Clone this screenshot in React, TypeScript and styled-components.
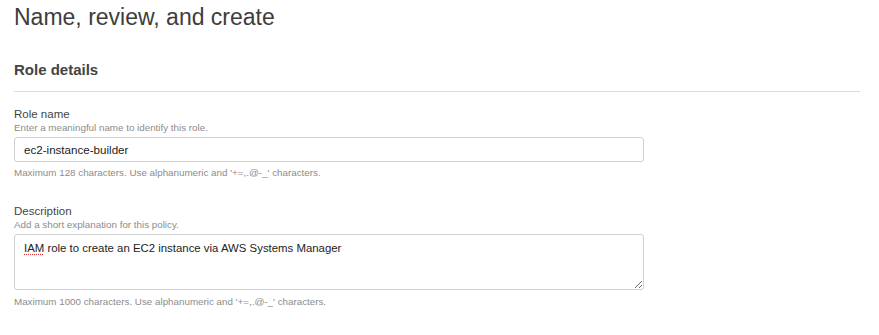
import React from 'react';
import styled, { createGlobalStyle } from 'styled-components';

const GlobalStyle = createGlobalStyle`
  html, body {
    margin: 0;
    padding: 0;
    background: #fff;
  }
  body {
    font-family: "Liberation Sans", Arial, Helvetica, sans-serif;
    color: #444;
  }
`;

const Page = styled.div`
  padding: 3px 19px 0 14px;
`;

const Title = styled.h1`
  margin: 0;
  font-size: 23px;
  line-height: 28px;
  font-weight: 400;
  color: #3d3d3d;
`;

const SectionTitle = styled.h2`
  margin: 30px 0 0;
  font-size: 15px;
  line-height: 18px;
  font-weight: 700;
  color: #444;
`;

const Divider = styled.hr`
  margin: 12px 0 0;
  border: none;
  border-top: 1px solid #dcdcdc;
`;

const Field = styled.div<{ $first?: boolean }>`
  display: flex;
  flex-direction: column;
  width: 630px;
  margin-top: ${p => (p.$first ? '15px' : '25px')};
`;

const Label = styled.label`
  font-size: 11.5px;
  line-height: 14px;
  color: #444;
`;

const Hint = styled.div<{ $gap?: number }>`
  font-size: 9.8px;
  line-height: 13px;
  color: #8c8c8c;
  margin-top: ${p => p.$gap ?? 0}px;
`;

const TextInput = styled.input`
  box-sizing: border-box;
  width: 100%;
  height: 25px;
  margin-top: 3px;
  padding: 0 9px;
  border: 1px solid #cfcfcf;
  border-radius: 3px;
  font-family: "Liberation Sans", Arial, sans-serif;
  font-size: 11.6px;
  color: #222;
  outline: none;
`;

const TextArea = styled.div`
  box-sizing: border-box;
  width: 630px;
  height: 56px;
  margin-top: 3px;
  padding: 6px 9px;
  border: 1px solid #cfcfcf;
  border-radius: 3px;
  font-size: 11.4px;
  line-height: 15px;
  color: #222;
  overflow: auto;
  resize: both;
`;

const Misspelled = styled.span`
  text-decoration: underline dotted #d33;
  text-underline-offset: 2px;
`;

export default function App() {
  return (
    <>
      <GlobalStyle />
      <Page>
        <Title>Name, review, and create</Title>
        <SectionTitle>Role details</SectionTitle>
        <Divider />

        <Field $first>
          <Label>Role name</Label>
          <Hint>Enter a meaningful name to identify this role.</Hint>
          <TextInput readOnly value="ec2-instance-builder" />
          <Hint $gap={4}>Maximum 128 characters. Use alphanumeric and '+=,.@-_' characters.</Hint>
        </Field>

        <Field>
          <Label>Description</Label>
          <Hint>Add a short explanation for this policy.</Hint>
          <TextArea role="textbox">
            <Misspelled>IAM</Misspelled> role to create an EC2 instance via AWS Systems Manager
          </TextArea>
          <Hint $gap={5}>Maximum 1000 characters. Use alphanumeric and '+=,.@-_' characters.</Hint>
        </Field>
      </Page>
    </>
  );
}
